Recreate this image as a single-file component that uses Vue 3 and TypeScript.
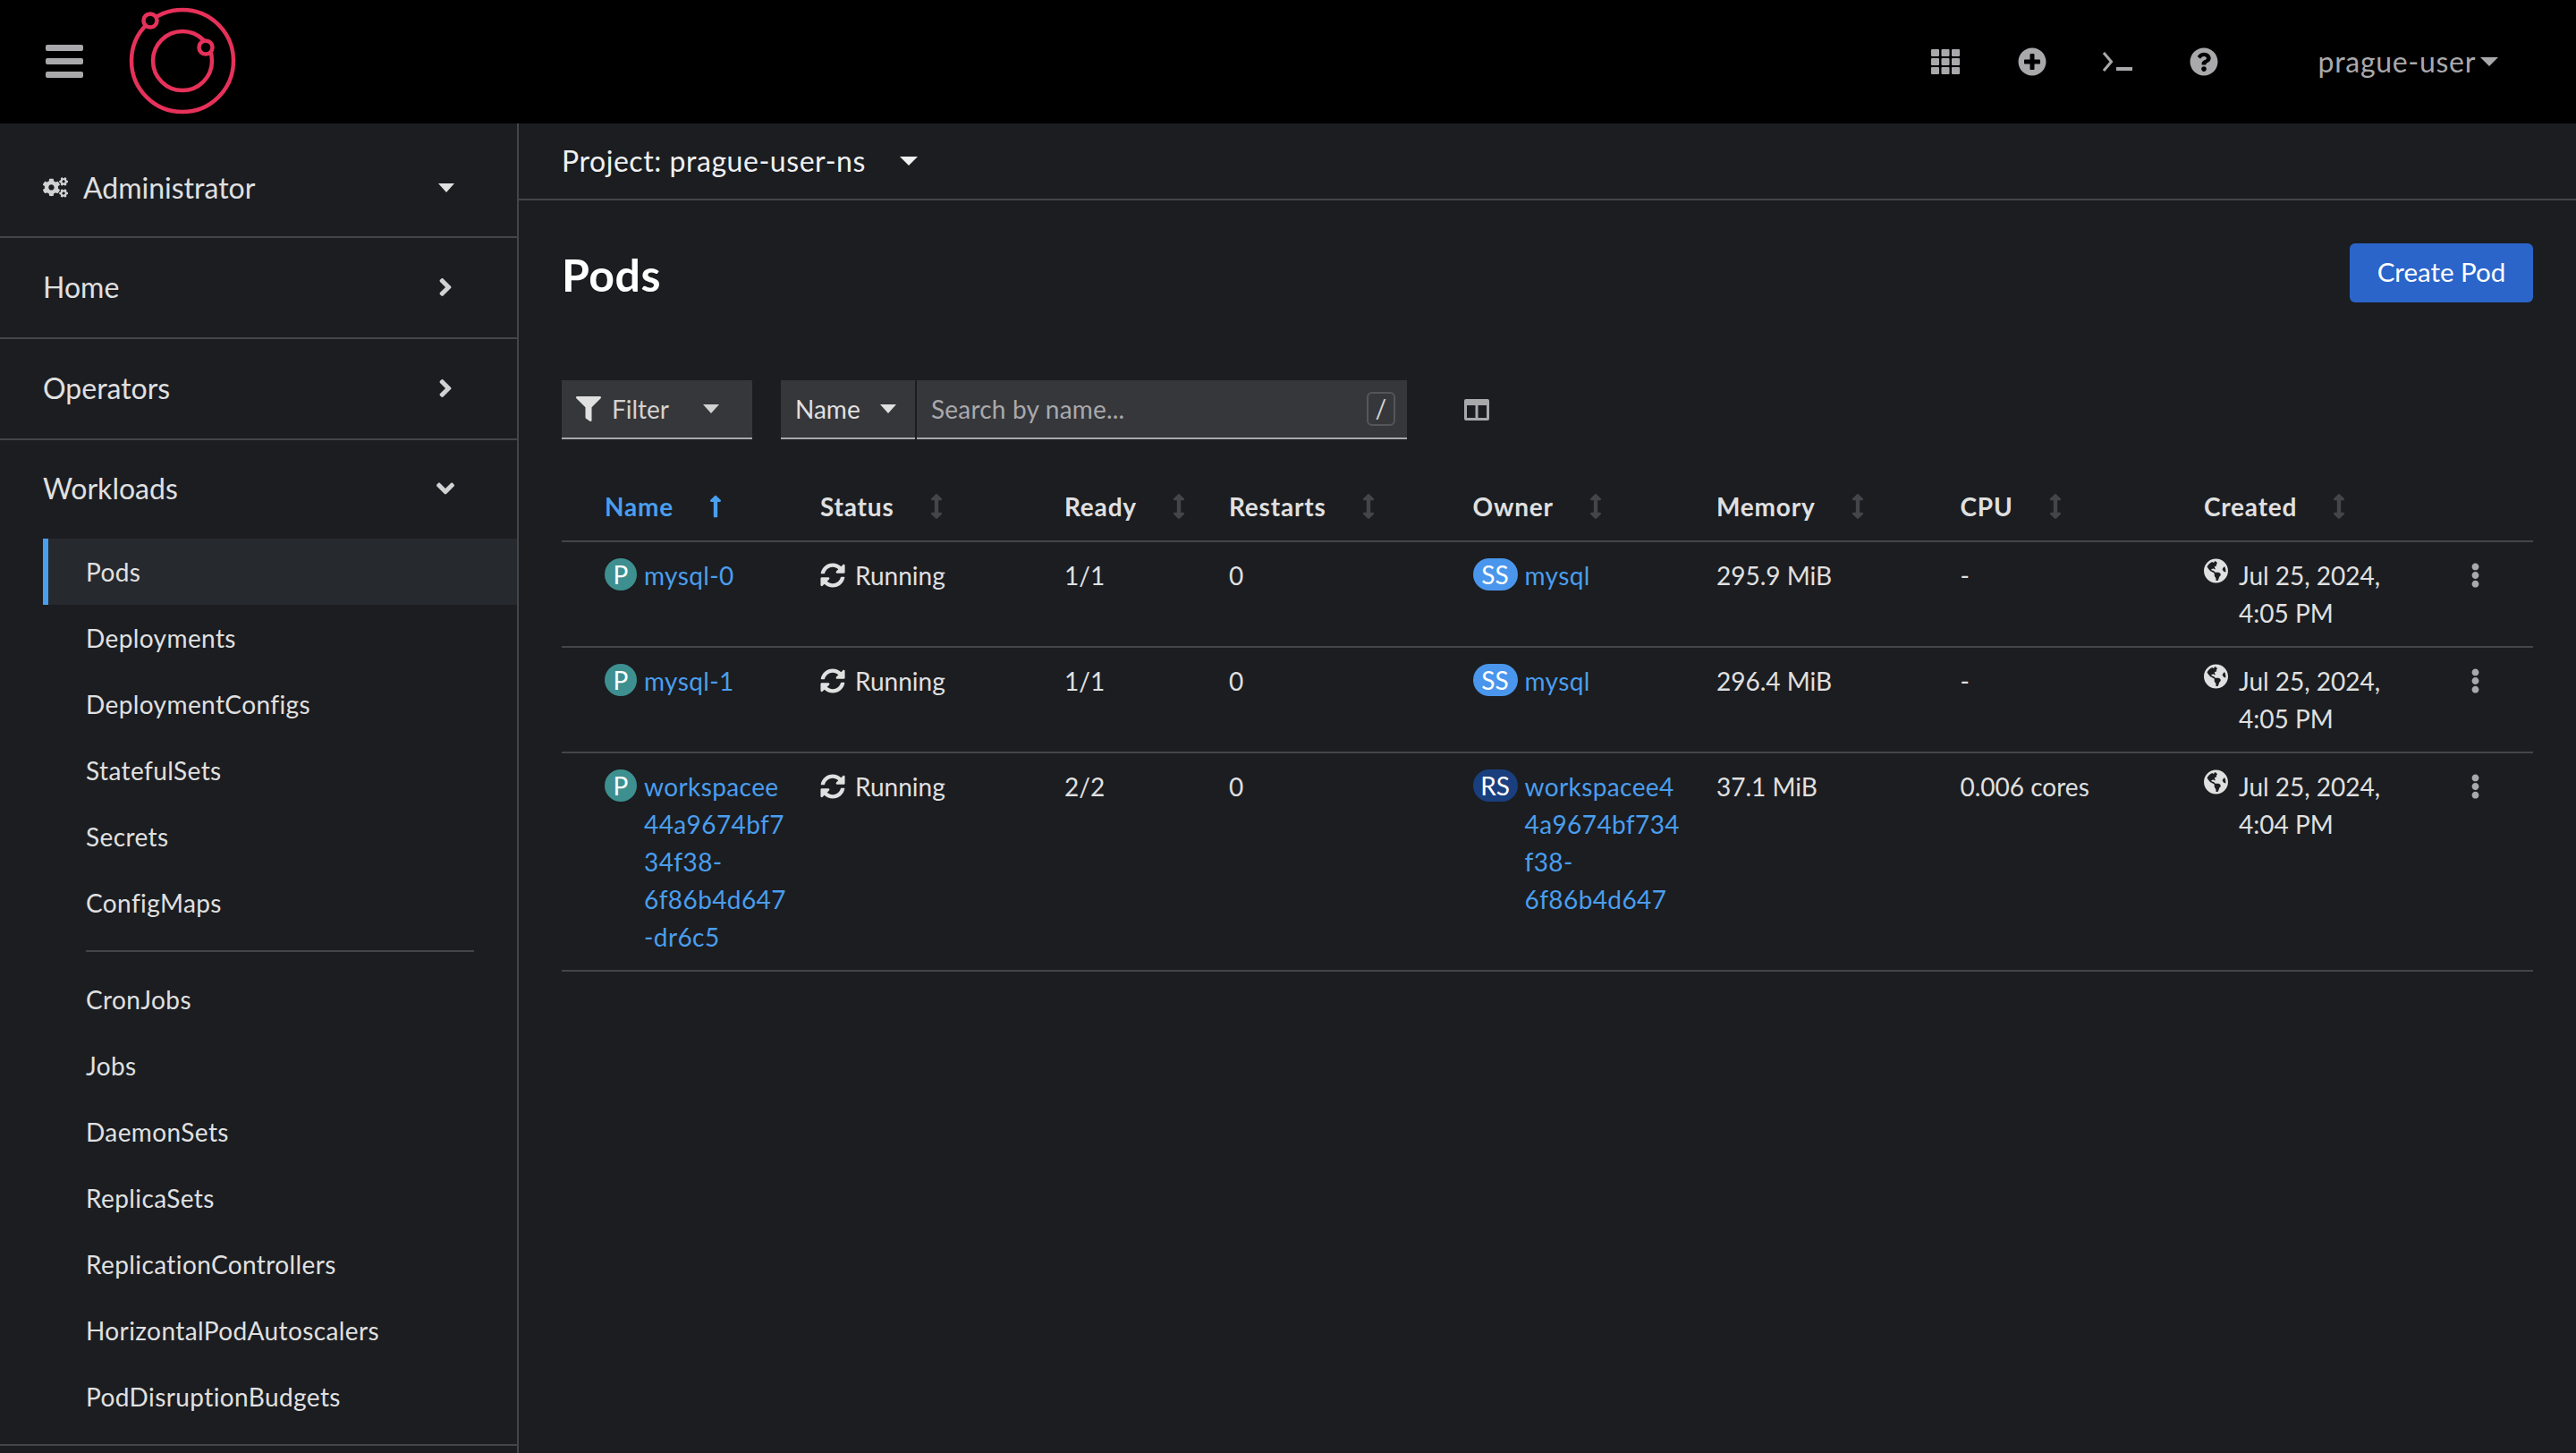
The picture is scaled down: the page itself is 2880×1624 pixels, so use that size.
<script setup lang="ts">
type Pod = {
  name: string[]
  ready: string
  owner: string[]
  ownerKind: 'SS' | 'RS'
  memory: string
  cpu: string
  date: string
  time: string
}

const icons = {
  plus: 'M256 8C119 8 8 119 8 256s111 248 248 248 248-111 248-248S393 8 256 8zm144 276c0 6.6-5.4 12-12 12h-92v92c0 6.6-5.4 12-12 12h-56c-6.6 0-12-5.4-12-12v-92h-92c-6.6 0-12-5.4-12-12v-56c0-6.6 5.4-12 12-12h92v-92c0-6.6 5.4-12 12-12h56c6.6 0 12 5.4 12 12v92h92c6.6 0 12 5.4 12 12v56z',
  help: 'M504 256c0 136.997-111.043 248-248 248S8 392.997 8 256C8 119.083 119.043 8 256 8s248 111.083 248 248zM262.655 90c-54.497 0-89.255 22.957-116.549 63.758-3.536 5.286-2.353 12.415 2.715 16.258l34.699 26.31c5.205 3.947 12.621 3.008 16.665-2.122 17.864-22.658 30.113-35.797 57.303-35.797 20.429 0 45.698 13.148 45.698 32.958 0 14.976-12.363 22.667-32.534 33.976C247.128 238.528 216 254.941 216 296v4c0 6.627 5.373 12 12 12h56c6.627 0 12-5.373 12-12v-1.333c0-28.462 83.186-29.647 83.186-106.667 0-58.002-60.165-102-116.531-102zM256 338c-25.365 0-46 20.635-46 46 0 25.364 20.635 46 46 46s46-20.636 46-46c0-25.365-20.635-46-46-46z',
  sync: 'M370.72 133.28C339.458 104.008 298.888 87.962 255.848 88c-77.458.068-144.328 53.178-162.791 126.85-1.344 5.363-6.122 9.15-11.651 9.15H24.103c-7.498 0-13.194-6.807-11.807-14.176C33.933 94.924 134.813 8 256 8c66.448 0 126.791 26.136 171.315 68.685L463.03 40.97C478.149 25.851 504 36.559 504 57.941V192c0 13.255-10.745 24-24 24H345.941c-21.382 0-32.09-25.851-16.971-40.971l41.75-41.749zM32 296h134.059c21.382 0 32.09 25.851 16.971 40.971l-41.75 41.75c31.262 29.273 71.835 45.319 114.876 45.28 77.418-.07 144.315-53.144 162.787-126.849 1.344-5.363 6.122-9.15 11.651-9.15h57.304c7.498 0 13.194 6.807 11.807 14.176C478.067 417.076 377.187 504 256 504c-66.448 0-126.791-26.136-171.315-68.685L48.97 471.03C33.851 486.149 8 475.441 8 454.059V320c0-13.255 10.745-24 24-24z',
  filter: 'M487.976 0H24.028C2.71 0-8.047 25.866 7.058 40.971L192 225.941V432c0 7.831 3.821 15.17 10.237 19.662l80 55.98C298.02 518.69 320 507.493 320 487.98V225.941l184.947-184.97C520.021 25.896 509.338 0 487.976 0z',
  kebab: 'M96 184c39.8 0 72 32.2 72 72s-32.2 72-72 72-72-32.2-72-72 32.2-72 72-72zM24 80c0 39.8 32.2 72 72 72s72-32.2 72-72S135.8 8 96 8 24 40.2 24 80zm0 352c0 39.8 32.2 72 72 72s72-32.2 72-72-32.2-72-72-72-72 32.2-72 72z',
  angleRight: 'M224.3 273l-136 136c-9.4 9.4-24.6 9.4-33.9 0l-22.6-22.6c-9.4-9.4-9.4-24.6 0-33.9l96.4-96.4-96.4-96.4c-9.4-9.4-9.4-24.6 0-33.9L54.3 103c9.4-9.4 24.6-9.4 33.9 0l136 136c9.5 9.4 9.5 24.6.1 34z',
  angleDown: 'M143 352.3L7 216.3c-9.4-9.4-9.4-24.6 0-33.9l22.6-22.6c9.4-9.4 24.6-9.4 33.9 0l96.4 96.4 96.4-96.4c9.4-9.4 24.6-9.4 33.9 0l22.6 22.6c9.4 9.4 9.4 24.6 0 33.9l-136 136c-9.2 9.4-24.4 9.4-33.8 0z',
  arrowUp: 'M88 166.059V468c0 6.627 5.373 12 12 12h56c6.627 0 12-5.373 12-12V166.059h46.059c21.382 0 32.09-25.851 16.971-40.971l-86.059-86.059c-9.373-9.373-24.569-9.373-33.941 0l-86.059 86.059c-15.119 15.119-4.411 40.971 16.971 40.971H88z',
  sort: 'M214.059 377.941H168V134.059h46.059c21.382 0 32.09-25.851 16.971-40.971L144.971 7.029c-9.373-9.373-24.569-9.373-33.941 0L24.971 93.088c-15.119 15.119-4.411 40.971 16.971 40.971H88v243.882H41.941c-21.382 0-32.09 25.851-16.971 40.971l86.059 86.059c9.373 9.373 24.569 9.373 33.941 0l86.059-86.059c15.12-15.119 4.412-40.971-16.972-40.971z',
  globe: 'M248 8C111.03 8 0 119.03 0 256s111.03 248 248 248 248-111.03 248-248S384.97 8 248 8zm82.29 357.6c-3.9 3.88-7.99 7.95-11.31 11.28-2.99 3-5.1 6.7-6.17 10.71-1.51 5.66-2.73 11.38-4.77 16.87l-17.39 46.85c-13.76 3-28 4.69-42.65 4.69v-27.38c1.69-12.62-7.64-36.26-22.63-51.25-6-6-9.37-14.14-9.37-22.63v-32.01c0-11.64-6.27-22.34-16.46-27.97-14.37-7.95-34.81-19.06-48.81-26.11-11.48-5.78-22.1-13.14-31.65-21.75l-.8-.72a114.792 114.792 0 0 1-18.06-20.74c-9.38-13.77-24.66-36.42-34.59-51.14 20.47-45.5 57.36-82.04 103.2-101.89l24.01 12.01C203.48 89.74 216 82.01 216 70.11v-11.3c7.99-1.29 16.12-2.11 24.39-2.42l28.3 28.3c6.25 6.25 6.25 16.38 0 22.63L264 112l-10.34 10.34c-3.12 3.12-3.12 8.19 0 11.31l4.69 4.69c3.12 3.12 3.12 8.19 0 11.31l-8 8a8.008 8.008 0 0 1-5.66 2.34h-8.99c-2.08 0-4.08.81-5.58 2.27l-9.92 9.65a8.008 8.008 0 0 0-1.58 9.31l15.59 31.19c2.66 5.32-1.21 11.58-7.15 11.58h-5.64c-1.93 0-3.79-.7-5.24-1.96l-9.28-8.06a16.017 16.017 0 0 0-15.55-3.1l-31.17 10.39a11.95 11.95 0 0 0-8.17 11.34c0 4.53 2.56 8.66 6.61 10.69l11.08 5.54c9.41 4.71 19.79 7.16 30.31 7.16s22.59 27.29 32 32h66.75c8.49 0 16.62 3.37 22.63 9.37l13.69 13.69a30.503 30.503 0 0 1 8.93 21.57 46.536 46.536 0 0 1-13.72 32.98zM417 274.25c-5.79-1.45-10.84-5-14.15-9.97l-17.98-26.97a23.97 23.97 0 0 1 0-26.62l19.59-29.38c2.32-3.47 5.5-6.29 9.24-8.15l12.98-6.49C440.2 193.59 448 223.87 448 256c0 8.67-.74 17.16-1.82 25.54L417 274.25z',
  cogs: 'M512.1 191l-8.2 14.3c-3 5.3-9.4 7.5-15.1 5.4-11.8-4.4-22.6-10.7-32.1-18.6-4.6-3.8-5.8-10.5-2.8-15.7l8.2-14.3c-6.9-8-12.3-17.3-15.9-27.4h-16.5c-6 0-11.2-4.3-12.2-10.3-2-12-2.1-24.6 0-37.1 1-6 6.2-10.4 12.2-10.4h16.5c3.6-10.1 9-19.4 15.9-27.4l-8.2-14.3c-3-5.2-1.9-11.9 2.8-15.7 9.5-7.9 20.4-14.2 32.1-18.6 5.7-2.1 12.1.1 15.1 5.4l8.2 14.3c10.5-1.9 21.2-1.9 31.7 0L552 6.3c3-5.3 9.4-7.5 15.1-5.4 11.8 4.4 22.6 10.7 32.1 18.6 4.6 3.8 5.8 10.5 2.8 15.7l-8.2 14.3c6.9 8 12.3 17.3 15.9 27.4h16.5c6 0 11.2 4.3 12.2 10.3 2 12 2.1 24.6 0 37.1-1 6-6.2 10.4-12.2 10.4h-16.5c-3.6 10.1-9 19.4-15.9 27.4l8.2 14.3c3 5.2 1.9 11.9-2.8 15.7-9.5 7.9-20.4 14.2-32.1 18.6-5.7 2.1-12.1-.1-15.1-5.4l-8.2-14.3c-10.4 1.9-21.2 1.9-31.7 0zm-10.5-58.8c38.5 29.6 82.4-14.3 52.8-52.8-38.5-29.7-82.4 14.3-52.8 52.8zM386.3 286.1l33.7 16.8c10.1 5.8 14.5 18.1 10.5 29.1-8.9 24.2-26.4 46.4-42.6 65.8-7.4 8.9-20.2 11.1-30.3 5.3l-29.1-16.8c-16 13.7-34.6 24.6-54.9 31.7v33.6c0 11.6-8.3 21.6-19.7 23.6-24.6 4.2-50.4 4.4-75.9 0-11.5-2-20-11.9-20-23.6V418c-20.3-7.2-38.9-18-54.9-31.7L74 403c-10 5.8-22.9 3.6-30.3-5.3-16.2-19.4-33.3-41.6-42.2-65.7-4-10.9.4-23.2 10.5-29.1l33.3-16.8c-3.9-20.9-3.9-42.4 0-63.4L12 205.8c-10.1-5.8-14.6-18.1-10.5-29 8.9-24.2 26-46.4 42.2-65.8 7.4-8.9 20.2-11.1 30.3-5.3l29.1 16.8c16-13.7 34.6-24.6 54.9-31.7V57.1c0-11.5 8.2-21.5 19.6-23.5 24.6-4.2 50.5-4.4 76-.1 11.5 2 20 11.9 20 23.6v33.6c20.3 7.2 38.9 18 54.9 31.7l29.1-16.8c10-5.8 22.9-3.6 30.3 5.3 16.2 19.4 33.2 41.6 42.1 65.8 4 10.9.1 23.2-10 29.1l-33.7 16.8c3.9 21 3.9 42.5 0 63.5zm-117.6 21.1c59.2-77-28.7-164.9-105.7-105.7-59.2 77 28.7 164.9 105.7 105.7zm243.4 182.7l-8.2 14.3c-3 5.3-9.4 7.5-15.1 5.4-11.8-4.4-22.6-10.7-32.1-18.6-4.6-3.8-5.8-10.5-2.8-15.7l8.2-14.3c-6.9-8-12.3-17.3-15.9-27.4h-16.5c-6 0-11.2-4.3-12.2-10.3-2-12-2.1-24.6 0-37.1 1-6 6.2-10.4 12.2-10.4h16.5c3.6-10.1 9-19.4 15.9-27.4l-8.2-14.3c-3-5.2-1.9-11.9 2.8-15.7 9.5-7.9 20.4-14.2 32.1-18.6 5.7-2.1 12.1.1 15.1 5.4l8.2 14.3c10.5-1.9 21.2-1.9 31.7 0l8.2-14.3c3-5.3 9.4-7.5 15.1-5.4 11.8 4.4 22.6 10.7 32.1 18.6 4.6 3.8 5.8 10.5 2.8 15.7l-8.2 14.3c6.9 8 12.3 17.3 15.9 27.4h16.5c6 0 11.2 4.3 12.2 10.3 2 12 2.1 24.6 0 37.1-1 6-6.2 10.4-12.2 10.4h-16.5c-3.6 10.1-9 19.4-15.9 27.4l8.2 14.3c3 5.2 1.9 11.9-2.8 15.7-9.5 7.9-20.4 14.2-32.1 18.6-5.7 2.1-12.1-.1-15.1-5.4l-8.2-14.3c-10.4 1.9-21.2 1.9-31.7 0zM501.6 431c38.5 29.6 82.4-14.3 52.8-52.8-38.5-29.6-82.4 14.3-52.8 52.8z',
}

const navTop = ['Home', 'Operators']
const workloadsA = ['Pods', 'Deployments', 'DeploymentConfigs', 'StatefulSets', 'Secrets', 'ConfigMaps']
const workloadsB = [
  'CronJobs',
  'Jobs',
  'DaemonSets',
  'ReplicaSets',
  'ReplicationControllers',
  'HorizontalPodAutoscalers',
  'PodDisruptionBudgets',
]

const columns = ['Status', 'Ready', 'Restarts', 'Owner', 'Memory', 'CPU', 'Created']

const pods: Pod[] = [
  {
    name: ['mysql-0'],
    ready: '1/1',
    owner: ['mysql'],
    ownerKind: 'SS',
    memory: '295.9 MiB',
    cpu: '-',
    date: 'Jul 25, 2024,',
    time: '4:05 PM',
  },
  {
    name: ['mysql-1'],
    ready: '1/1',
    owner: ['mysql'],
    ownerKind: 'SS',
    memory: '296.4 MiB',
    cpu: '-',
    date: 'Jul 25, 2024,',
    time: '4:05 PM',
  },
  {
    name: ['workspacee', '44a9674bf7', '34f38-', '6f86b4d647', '-dr6c5'],
    ready: '2/2',
    owner: ['workspacee4', '4a9674bf734', 'f38-', '6f86b4d647'],
    ownerKind: 'RS',
    memory: '37.1 MiB',
    cpu: '0.006 cores',
    date: 'Jul 25, 2024,',
    time: '4:04 PM',
  },
]
</script>

<template>
  <div class="page">
    <header class="masthead">
      <svg class="burger" viewBox="0 0 42 38">
        <rect y="0" width="42" height="7" rx="2" />
        <rect y="15" width="42" height="7" rx="2" />
        <rect y="30" width="42" height="7" rx="2" />
      </svg>
      <svg class="logo" viewBox="0 0 122 122">
        <circle cx="61" cy="61" r="57" />
        <circle cx="61" cy="61" r="33" />
        <circle class="dot" cx="25" cy="16" r="7.5" />
        <circle class="dot" cx="87" cy="46" r="7.5" />
      </svg>
      <div class="tools">
        <svg class="tool grid" viewBox="0 0 32 28">
          <template v-for="r in 3" :key="r">
            <rect v-for="c in 3" :key="c" :x="(c - 1) * 11.5" :y="(r - 1) * 10" width="9" height="8" rx="1" />
          </template>
        </svg>
        <svg class="tool plus" viewBox="0 0 512 512"><path :d="icons.plus" /></svg>
        <svg class="tool term" viewBox="0 0 33 22">
          <path d="M1 1l8.5 10L1 21" fill="none" stroke="#a9a9ac" stroke-width="3" />
          <rect x="15" y="17" width="18" height="4" />
        </svg>
        <svg class="tool help" viewBox="0 0 512 512"><path :d="icons.help" /></svg>
        <div class="user">prague-user<span class="caret user-caret"></span></div>
      </div>
    </header>

    <div class="body">
      <aside class="sidebar">
        <div class="perspective">
          <svg class="cogs" viewBox="0 0 640 512"><path :d="icons.cogs" /></svg>
          <span class="perspective-name">Administrator</span>
          <span class="caret nav-caret"></span>
        </div>
        <div v-for="item in navTop" :key="item" class="nav-group">
          <span>{{ item }}</span>
          <svg class="chevron" viewBox="0 0 256 512"><path :d="icons.angleRight" /></svg>
        </div>
        <div class="nav-group open">
          <span>Workloads</span>
          <svg class="chevron-down" viewBox="0 0 320 512"><path :d="icons.angleDown" /></svg>
        </div>
        <ul class="sub-nav">
          <li v-for="(item, i) in workloadsA" :key="item" :class="{ active: i === 0 }">{{ item }}</li>
          <li class="divider"></li>
          <li v-for="item in workloadsB" :key="item">{{ item }}</li>
        </ul>
        <div class="nav-end"></div>
      </aside>

      <main class="content">
        <div class="project-bar">
          <span>Project: prague-user-ns</span>
          <span class="caret project-caret"></span>
        </div>

        <div class="title-row">
          <h1>Pods</h1>
          <button class="create">Create Pod</button>
        </div>

        <div class="toolbar">
          <div class="select filter">
            <svg class="filter-icon" viewBox="0 0 512 512"><path :d="icons.filter" /></svg>
            <span>Filter</span>
            <span class="caret select-caret"></span>
          </div>
          <div class="select name-select">
            <span>Name</span>
            <span class="caret select-caret"></span>
          </div>
          <div class="search">
            <span class="placeholder">Search by name...</span>
            <span class="slash">/</span>
          </div>
          <svg class="columns-icon" viewBox="0 0 28 24">
            <path d="M2 0h24a2 2 0 0 1 2 2v20a2 2 0 0 1-2 2H2a2 2 0 0 1-2-2V2a2 2 0 0 1 2-2zm1 7v14h9.500V7zm12.500 0v14H25V7z" fill-rule="evenodd" />
          </svg>
        </div>

        <table class="pods">
          <colgroup>
            <col class="c-name" />
            <col class="c-status" />
            <col class="c-ready" />
            <col class="c-restarts" />
            <col class="c-owner" />
            <col class="c-memory" />
            <col class="c-cpu" />
            <col class="c-created" />
            <col class="c-kebab" />
          </colgroup>
          <thead>
            <tr>
              <th class="first">
                <span class="th-inner sorted">
                  Name
                  <svg class="sort-icon" viewBox="0 0 256 512"><path :d="icons.arrowUp" /></svg>
                </span>
              </th>
              <th v-for="col in columns" :key="col">
                <span class="th-inner">
                  {{ col }}
                  <svg class="sort-icon" viewBox="0 0 256 512"><path :d="icons.sort" /></svg>
                </span>
              </th>
              <th></th>
            </tr>
          </thead>
          <tbody>
            <tr v-for="pod in pods" :key="pod.name[0]">
              <td class="first">
                <div class="resource">
                  <span class="badge pod-badge">P</span>
                  <a class="link"><span v-for="line in pod.name" :key="line" class="line">{{ line }}</span></a>
                </div>
              </td>
              <td>
                <div class="status">
                  <svg class="sync" viewBox="0 0 512 512"><path :d="icons.sync" /></svg>
                  Running
                </div>
              </td>
              <td>{{ pod.ready }}</td>
              <td>0</td>
              <td>
                <div class="resource">
                  <span class="badge" :class="pod.ownerKind === 'SS' ? 'ss-badge' : 'rs-badge'">{{ pod.ownerKind }}</span>
                  <a class="link"><span v-for="line in pod.owner" :key="line" class="line">{{ line }}</span></a>
                </div>
              </td>
              <td>{{ pod.memory }}</td>
              <td>{{ pod.cpu }}</td>
              <td>
                <div class="created">
                  <svg class="globe" viewBox="0 0 496 512"><path :d="icons.globe" /></svg>
                  <div>
                    <span class="line">{{ pod.date }}</span>
                    <span class="line">{{ pod.time }}</span>
                  </div>
                </div>
              </td>
              <td>
                <svg class="kebab" viewBox="0 0 192 512"><path :d="icons.kebab" /></svg>
              </td>
            </tr>
          </tbody>
        </table>
      </main>
    </div>
  </div>
</template>

<style>
html,
body {
  margin: 0;
  background: #1b1d21;
}
</style>

<style scoped>
.page {
  width: 2880px;
  height: 1624px;
  overflow: hidden;
  background: #1b1d21;
  color: #e0e0e0;
  font-family: 'Lato', 'Noto Sans', sans-serif;
  font-size: 28px;
  line-height: 42px;
}

.masthead {
  height: 138px;
  background: #000;
  display: flex;
  align-items: center;
  box-sizing: border-box;
  padding-left: 51px;
}

.burger {
  width: 42px;
  height: 38px;
  fill: #a9a9ac;
}

.logo {
  width: 122px;
  height: 122px;
  margin-left: 50px;
  margin-top: -2px;
  fill: none;
  stroke: #e6315a;
  stroke-width: 4.5;
}

.logo .dot {
  fill: #000;
}

.tools {
  margin-left: auto;
  display: flex;
  align-items: center;
  fill: #a9a9ac;
}

.tool {
  display: block;
}

.grid {
  width: 32px;
  height: 28px;
}

.plus {
  width: 32px;
  height: 32px;
  margin-left: 65px;
}

.term {
  width: 33px;
  height: 22px;
  margin-left: 63px;
}

.help {
  width: 32px;
  height: 32px;
  margin-left: 64px;
}

.user {
  margin-left: 112px;
  margin-right: 87px;
  font-size: 32px;
  letter-spacing: 0.7px;
  color: #a9a9ac;
  display: flex;
  align-items: center;
}

.caret {
  display: inline-block;
  width: 0;
  height: 0;
  border-left: 10px solid transparent;
  border-right: 10px solid transparent;
  border-top: 10px solid currentColor;
}

.user-caret {
  margin-left: 5px;
  margin-top: -1px;
}

.body {
  display: flex;
  height: 1486px;
}

.sidebar {
  width: 580px;
  flex: none;
  box-sizing: border-box;
  border-right: 2px solid #444548;
}

.perspective {
  height: 128px;
  box-sizing: border-box;
  padding: 17px 70px 0 48px;
  display: flex;
  align-items: center;
  font-size: 32px;
  border-bottom: 2px solid #444548;
}

.cogs {
  width: 28px;
  height: 23px;
  fill: #d2d2d2;
}

.perspective-name {
  margin-left: 17px;
}

.nav-caret {
  margin-left: auto;
  border-left-width: 9px;
  border-right-width: 9px;
}

.nav-group {
  height: 113px;
  box-sizing: border-box;
  padding: 0 72px 2px 48px;
  display: flex;
  align-items: center;
  justify-content: space-between;
  font-size: 32px;
  border-bottom: 2px solid #444548;
}

.nav-group.open {
  border-bottom: 0;
  height: 110px;
  padding-bottom: 2px;
}

.chevron {
  width: 16px;
  height: 32px;
  fill: #d2d2d2;
}

.chevron-down {
  width: 20px;
  height: 32px;
  margin-right: -2px;
  fill: #d2d2d2;
}

.sub-nav {
  list-style: none;
  margin: 0;
  padding: 0;
  letter-spacing: 0.4px;
}

.sub-nav li {
  height: 74px;
  box-sizing: border-box;
  padding: 16px 0 16px 96px;
}

.sub-nav li.active {
  margin-left: 48px;
  padding-left: 42px;
  background: #26292d;
  border-left: 6px solid #4a9eee;
}

.sub-nav li.divider {
  height: 2px;
  padding: 0;
  margin: 16px 48px 16px 96px;
  background: #444548;
}

.nav-end {
  margin-top: 16px;
  height: 2px;
  background: #444548;
}

.content {
  flex: 1;
  min-width: 0;
  padding: 0 48px;
}

.project-bar {
  height: 86px;
  margin: 0 -48px;
  padding-left: 48px;
  box-sizing: border-box;
  border-bottom: 2px solid #444548;
  display: flex;
  align-items: center;
  font-size: 32px;
  letter-spacing: 0.55px;
  color: #f0f0f0;
}

.project-caret {
  margin-left: 38px;
}

.title-row {
  height: 201px;
  display: flex;
  justify-content: space-between;
  align-items: flex-start;
}

.title-row h1 {
  margin: 47px 0 0;
  font-size: 50px;
  line-height: 72px;
  font-weight: 700;
  letter-spacing: 0.5px;
  color: #fff;
}

.create {
  margin-top: 48px;
  width: 205px;
  height: 66px;
  padding: 0 0 2px;
  background: #2b65c9;
  color: #fff;
  border: 0;
  border-radius: 6px;
  font: inherit;
  font-size: 29.500px;
}

.toolbar {
  display: flex;
  align-items: center;
  height: 66px;
}

.select {
  height: 66px;
  box-sizing: border-box;
  background: #36373b;
  border-bottom: 2px solid #a9a9ac;
  display: flex;
  align-items: center;
}

.filter {
  width: 213px;
  padding-left: 16px;
  color: #d2d2d2;
}

.filter-icon {
  width: 28px;
  height: 28px;
  fill: #e0e0e0;
  margin-right: 12px;
}

.select-caret {
  border-left-width: 9px;
  border-right-width: 9px;
}

.filter .select-caret {
  margin-left: 38px;
}

.name-select {
  width: 150px;
  margin-left: 32px;
  padding-left: 16px;
  color: #e0e0e0;
}

.name-select .select-caret {
  margin-left: 22px;
}

.search {
  width: 548px;
  height: 66px;
  margin-left: 2px;
  box-sizing: border-box;
  background: #36373b;
  border-bottom: 2px solid #a9a9ac;
  display: flex;
  align-items: center;
  justify-content: space-between;
  padding: 0 13px 0 16px;
  letter-spacing: 0.2px;
}

.placeholder {
  color: #a9a9ac;
}

.slash {
  width: 32px;
  height: 38px;
  box-sizing: border-box;
  border: 2px solid #55565a;
  border-radius: 6px;
  text-align: center;
  line-height: 32px;
  font-size: 28px;
  color: #d2d2d2;
}

.columns-icon {
  width: 28px;
  height: 24px;
  margin-left: 64px;
  fill: #a9a9ac;
}

.pods {
  table-layout: fixed;
  border-collapse: collapse;
  width: 2204px;
  margin-top: 0;
}

.c-name {
  width: 289px;
}
.c-status {
  width: 273px;
}
.c-ready {
  width: 184px;
}
.c-restarts,
.c-owner,
.c-memory,
.c-cpu {
  width: 272.5px;
}
.c-created {
  width: 291px;
}

th {
  height: 114px;
  box-sizing: border-box;
  padding: 36px 0 0;
  text-align: left;
  vertical-align: middle;
  font-weight: 700;
  letter-spacing: 0.8px;
  color: #e0e0e0;
  border-bottom: 2px solid #444548;
}

.th-inner {
  display: inline-flex;
  align-items: center;
  gap: 40px;
}

.sorted {
  color: #4a9eee;
}

.sort-icon {
  width: 14px;
  height: 28px;
  fill: #44454a;
}

.sorted .sort-icon {
  fill: #4a9eee;
}

td {
  padding: 16px 0;
  vertical-align: top;
  border-bottom: 2px solid #444548;
}

.first {
  padding-left: 48px;
}

.resource {
  display: flex;
  align-items: flex-start;
  gap: 8px;
}

.line {
  display: block;
}

.link {
  color: #4a9eee;
  letter-spacing: 0.4px;
}

.badge {
  flex: none;
  min-width: 36px;
  height: 36px;
  margin-top: 2px;
  box-sizing: border-box;
  border-radius: 18px;
  padding: 0 8px;
  text-align: center;
  line-height: 36px;
  color: #fff;
}

.pod-badge {
  background: #3e9090;
  padding: 0;
}

.ss-badge {
  background: #4a96ec;
  width: 50px;
  padding: 0;
}

.rs-badge {
  background: #1a3f7f;
  width: 50px;
  padding: 0;
}

.status {
  display: flex;
  align-items: center;
  gap: 11px;
}

.sync {
  width: 28px;
  height: 28px;
  fill: #e0e0e0;
}

.created {
  display: flex;
  align-items: flex-start;
  gap: 12px;
}

.globe {
  flex: none;
  width: 27px;
  height: 28px;
  margin-top: 2px;
  fill: #e0e0e0;
}

.kebab {
  display: block;
  width: 11px;
  height: 28px;
  margin: 7px 0 0 7px;
  fill: #a9a9ac;
}
</style>
